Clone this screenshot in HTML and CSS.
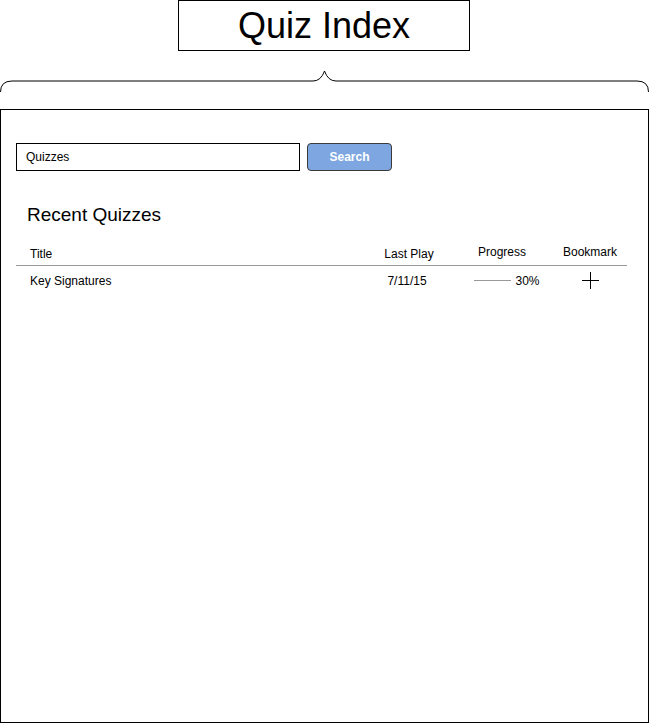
FILE: index.html
```html
<!DOCTYPE html>
<html>
<head>
<meta charset="utf-8">
<title>Quiz Index</title>
<link rel="stylesheet" href="styles.css">
</head>
<body>
  <div class="head">
    <div class="title_box">Quiz Index</div>
  </div>
  <svg class="brace" width="649" height="30" viewBox="0 0 649 30">
    <path d="M0.5 22 Q0.5 11 12 11 L313 11 Q321 11 324.5 1 Q328 11 336 11 L637 11 Q648.5 11 648.5 22" fill="none" stroke="#000" stroke-width="1"/>
  </svg>
  <div id="main">
    <div class="search">
      <div class="search_input">Quizzes</div>
      <div class="search_btn">Search</div>
    </div>
    <h2 class="recent">Recent Quizzes</h2>
    <div class="table">
      <div class="row head_row">
        <div class="c_title">Title</div>
        <div class="c_date">Last Play</div>
        <div class="c_prog">Progress</div>
        <div class="c_mark">Bookmark</div>
      </div>
      <div class="row">
        <div class="c_title">Key Signatures</div>
        <div class="c_date val">7/11/15</div>
        <div class="c_prog val"><span class="bar"></span>30%</div>
        <div class="c_mark">
          <svg width="17" height="17" viewBox="0 0 17 17"><path d="M8.5 0 V17 M0 8.5 H17" stroke="#000" stroke-width="1"/></svg>
        </div>
      </div>
    </div>
  </div>
</body>
</html>
```

FILE: styles.css
```css
* {margin:0;padding:0;box-sizing:border-box}
body {background:#fff;font-family:"Liberation Sans",Arial,sans-serif;color:#000;width:649px}

.head {height:70px}
.title_box {margin-left:178px;width:292px;height:51px;border:1px solid #000;font-size:36px;line-height:49px;text-align:center}
.brace {display:block;margin-bottom:9px}

#main {width:649px;height:614px;border:1px solid #000;padding:33px 0 0 15px}
.search {display:flex;gap:7px;height:28px}
.search_input {width:284px;height:28px;border:1px solid #000;font-size:12px;line-height:26px;padding-left:9px}
.search_btn {width:85px;height:28px;background:#7ea6e0;border:1px solid #3a3a3a;border-radius:4px;color:#fff;font-weight:bold;font-size:12px;line-height:26px;text-align:center}

.recent {font-weight:normal;font-size:19px;margin:33px 0 0 11px;line-height:22px}

.table {width:611px;margin-top:14px;font-size:12px}
.row {display:flex;align-items:center;height:29px}
.head_row {height:26px;border-bottom:1px solid #999;align-items:flex-end;padding-bottom:4px}
.c_title {width:344px;padding-left:14px}
.c_date {width:98px;text-align:center}
.c_date.val {padding-right:4px}
.c_prog {width:88px;text-align:center;display:flex;align-items:center;justify-content:center}
.c_prog.val {padding-left:10px}
.c_mark {width:81px;padding-left:7px;text-align:center;display:flex;justify-content:center}
.head_row .c_prog,.head_row .c_mark {position:relative;top:-2px}
.bar {display:inline-block;width:37px;border-top:1px solid #999;margin-right:4px}
```
